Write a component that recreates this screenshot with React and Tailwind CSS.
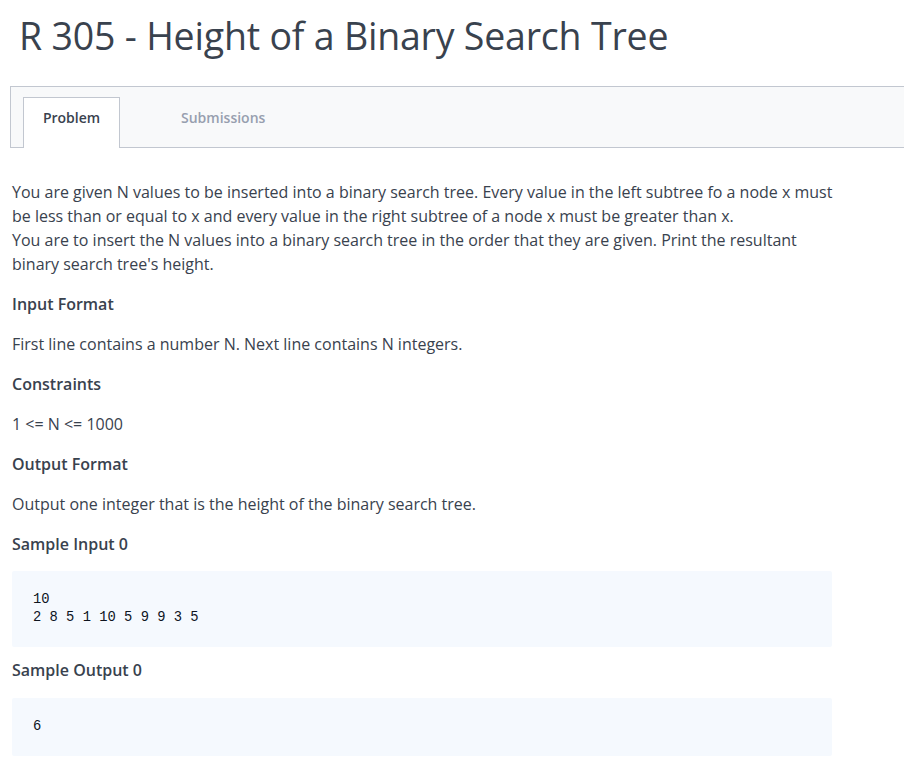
export default function App() {
  return (
    <div className="min-h-screen bg-white text-[#39424e] font-['Open_Sans',sans-serif] overflow-hidden">
      <h1 className="pl-[19px] pt-[10px] text-[37.5px] leading-[52px] font-normal tracking-[-0.2px]">
        R 305 - Height of a Binary Search Tree
      </h1>

      <div className="ml-[10px] mt-[24px] h-[62px] border-y border-l border-[#c2c7d0] bg-[#f8f9fa] flex items-end pl-[12px]">
        <div className="w-[97px] h-[51px] -mb-px bg-white border-x border-t border-[#c2c7d0] flex justify-center pt-[10px] text-[14px] leading-[20px] font-semibold text-[#39424e]">
          Problem
        </div>
        <div className="h-[51px] pt-[12px] ml-[61px] text-[14px] leading-[20px] font-semibold text-[#979faf]">
          Submissions
        </div>
      </div>

      <div className="px-[12px] pt-[32px] w-[844px] text-[16px] leading-[24px]">
        <p className="w-[828px]">
          You are given N values to be inserted into a binary search tree. Every value in the left subtree fo a node x must be less than or equal to x and every value in the right subtree of a node x must be greater than x.
          <br />
          You are to insert the N values into a binary search tree in the order that they are given. Print the resultant binary search tree's height.
        </p>

        <h3 className="mt-[16px] font-semibold">Input Format</h3>
        <p className="mt-[16px]">First line contains a number N. Next line contains N integers.</p>

        <h3 className="mt-[16px] font-semibold">Constraints</h3>
        <p className="mt-[16px]">1 &lt;= N &lt;= 1000</p>

        <h3 className="mt-[16px] font-semibold">Output Format</h3>
        <p className="mt-[16px]">Output one integer that is the height of the binary search tree.</p>

        <h3 className="mt-[16px] font-semibold">Sample Input 0</h3>
        <pre className="mt-[15px] bg-[#f5f9fe] rounded-[2px] px-[21px] pt-[20px] pb-[20px] font-['Liberation_Mono',monospace] text-[13.8px] leading-[18px] text-[#0e141e]">
{`10
2 8 5 1 10 5 9 9 3 5`}
        </pre>

        <h3 className="mt-[11px] font-semibold">Sample Output 0</h3>
        <pre className="mt-[16px] bg-[#f5f9fe] rounded-[2px] px-[21px] pt-[20px] pb-[20px] font-['Liberation_Mono',monospace] text-[13.8px] leading-[18px] text-[#0e141e]">
{`6`}
        </pre>
      </div>
    </div>
  );
}
